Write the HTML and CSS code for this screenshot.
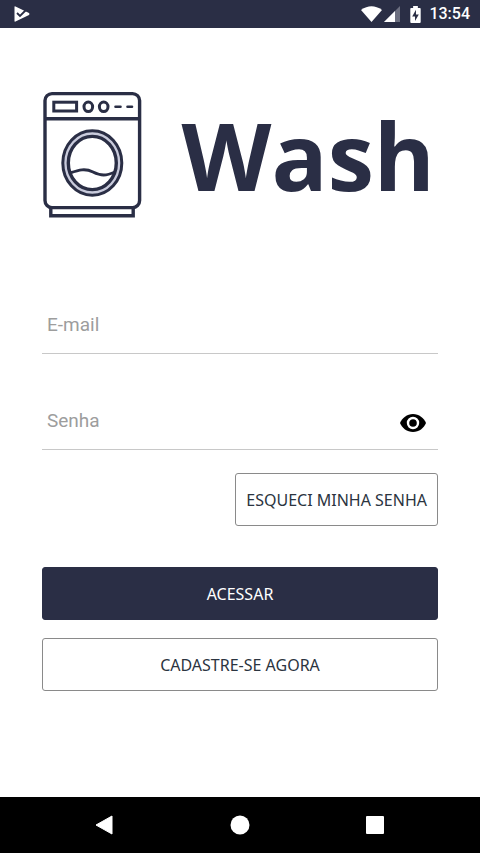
FILE: index.html
```
<!DOCTYPE html>
<html lang="pt-BR">
<head>
<meta charset="utf-8">
<meta name="viewport" content="width=device-width, initial-scale=1">
<title>Wash</title>
<link rel="stylesheet" href="styles.css">
</head>
<body>
<header class="status">
  <svg class="status-app" width="16" height="16" viewBox="0 0 16 16" aria-hidden="true">
    <path d="M.5 1Q.5 0 1.500 .5L15 7Q16 8 15 9L1.500 15.500Q.5 16 .5 15Z" fill="#fff"/>
    <path d="M3 7l3 3 7-7" fill="none" stroke="#2a2e45" stroke-width="1.800"/>
  </svg>
  <div class="status-icons">
    <svg width="21" height="16" viewBox="0 0 21 16" aria-hidden="true">
      <path d="M0 4Q10.500-3.500 21 4L10.500 16Z" fill="#fff"/>
    </svg>
    <svg class="signal" width="16" height="16" viewBox="0 0 16 16" aria-hidden="true">
      <path d="M16 0V16H0Z" fill="#6c6f80"/>
      <path d="M11 5V16H0Z" fill="#fff"/>
    </svg>
    <svg class="battery" width="11" height="17" viewBox="0 0 11 18" aria-hidden="true">
      <path d="M3 0h5v2h2q1 0 1 1v14q0 1-1 1H1q-1 0-1-1V3q0-1 1-1h2Z" fill="#fff"/>
      <path d="M6 4 2 11h3v5l4-7H6Z" fill="#2a2e45"/>
    </svg>
    <time class="clock">13:54</time>
  </div>
</header>

<main class="login">
  <div class="brand">
    <svg width="100" height="127" viewBox="0 0 100 127" fill="none" stroke="#2a2e45" stroke-width="3.4" aria-hidden="true">
      <rect x="3" y="2.6" width="94.6" height="114" rx="7"/>
      <path d="M3 27.7H98M8.8 117V124.7H91.2V117"/>
      <rect x="11.8" y="11.2" width="22.8" height="8.8" stroke-width="3"/>
      <ellipse cx="46.3" cy="15.800" rx="4.300" ry="4.800" stroke-width="3"/>
      <ellipse cx="61.7" cy="15.800" rx="4.300" ry="4.800" stroke-width="3"/>
      <path d="M73.500 15.800h5M85.500 15.800h4.500" stroke-width="2.600" stroke-linecap="round"/>
      <ellipse cx="50.3" cy="72" rx="27" ry="29.6" stroke="#c9cbdc" stroke-width="5"/>
      <ellipse cx="50.3" cy="72" rx="29.5" ry="32.2" stroke-width="3"/>
      <ellipse cx="50.3" cy="72" rx="24" ry="26.6" stroke-width="3.400"/>
      <path d="M28 82C37 79 43 77 51 81S64 85 73 81" stroke-width="3"/>
    </svg>
    <h1 class="brand-name">Wash</h1>
  </div>

  <form class="form">
    <div class="field">
      <input class="input" type="email" placeholder="E-mail" aria-label="E-mail">
    </div>
    <div class="field">
      <input class="input" type="password" placeholder="Senha" aria-label="Senha">
      <button class="reveal" type="button" aria-label="Mostrar senha">
        <svg width="26" height="18" viewBox="0 0 26 18" aria-hidden="true">
          <path d="M0 9C2 4 7 0 13 0S24 4 26 9C24 14 19 18 13 18S2 14 0 9Z" fill="#000"/>
          <circle cx="13" cy="9" r="5" fill="none" stroke="#fff" stroke-width="2.4"/>
        </svg>
      </button>
    </div>
    <button class="button button-side" type="button">ESQUECI MINHA SENHA</button>
    <button class="button button-primary" type="submit">ACESSAR</button>
    <button class="button" type="button">CADASTRE-SE AGORA</button>
  </form>
</main>

<nav class="system-nav">
  <button class="nav-button" type="button" aria-label="Voltar">
    <svg width="20" height="20" viewBox="0 0 20 20" aria-hidden="true"><path d="M1 10 17 1V19Z" fill="#fff" stroke="#fff" stroke-linejoin="round"/></svg>
  </button>
  <button class="nav-button" type="button" aria-label="Início">
    <svg width="20" height="20" viewBox="0 0 20 20" aria-hidden="true"><circle cx="10" cy="10" r="9.5" fill="#fff"/></svg>
  </button>
  <button class="nav-button" type="button" aria-label="Recentes">
    <svg width="20" height="20" viewBox="0 0 20 20" aria-hidden="true"><rect x="1" y="1" width="18" height="18" rx="1" fill="#fff"/></svg>
  </button>
</nav>
</body>
</html>
```
FILE: styles.css
```
* {
  box-sizing: border-box;
}

body {
  margin: 0;
  min-height: 100vh;
  display: flex;
  flex-direction: column;
  background: #fff;
  color: #2b3440;
  font-family: "Noto Sans", sans-serif;
}

svg {
  display: block;
}

.status {
  display: flex;
  align-items: center;
  justify-content: space-between;
  height: 28px;
  padding: 0 10px 0 14px;
  background: #2a2e45;
  color: #fff;
}

.status-icons {
  display: flex;
  align-items: center;
}

.signal {
  margin-left: 2px;
}

.battery {
  margin: 0 8px 0 10px;
}

.clock {
  font: 500 16px/28px Roboto, sans-serif;
}

.login {
  flex: 1;
  padding: 62px 42px 32px;
}

.brand {
  display: flex;
  align-items: center;
  justify-content: space-between;
}

.brand-name {
  margin: 0;
  padding: 2px 3px 0 0;
  color: #2a2e45;
  font-family: "Open Sans", sans-serif;
  font-size: 93px;
  line-height: 126px;
  font-weight: 700;
}

.form {
  display: flex;
  flex-direction: column;
  margin-top: 78px;
}

.field {
  display: flex;
  align-items: center;
  height: 58px;
  margin-bottom: 38px;
  border-bottom: 1px solid #c8c8c8;
}

.field + .field {
  margin-bottom: 23px;
}

.input {
  flex: 1;
  min-width: 0;
  height: 100%;
  padding: 0 5px;
  border: 0;
  outline: 0;
  background: none;
  font: 19px/24px Roboto, sans-serif;
}

.input::placeholder {
  color: #9d9d9d;
  opacity: 1;
}

.reveal {
  padding: 8px 12px 4px;
  border: 0;
  background: none;
}

.button {
  height: 53px;
  padding: 0 10px;
  border: 1px solid #8a8a8a;
  border-radius: 3px;
  background: #fff;
  color: #2b3440;
  font: 16px/24px "Noto Sans", sans-serif;
}

.button-side {
  align-self: flex-end;
  margin-bottom: 41px;
}

.button-primary {
  margin-bottom: 18px;
  border-color: #2a2e45;
  background: #2a2e45;
  color: #fff;
}

.system-nav {
  display: flex;
  align-items: center;
  justify-content: center;
  gap: 115px;
  height: 56px;
  background: #000;
}

.nav-button {
  padding: 0;
  border: 0;
  background: none;
}
```
